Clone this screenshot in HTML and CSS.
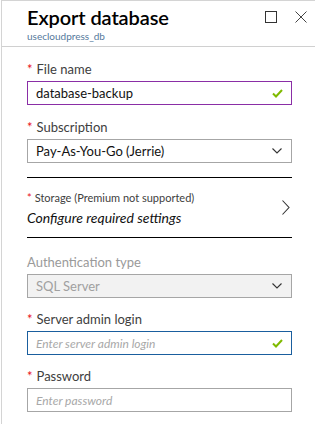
FILE: index.html
```html
<!DOCTYPE html>
<html>
<head>
<meta charset="utf-8">
<link rel="stylesheet" href="styles.css">
</head>
<body>
<div class="blade">
  <header class="head">
    <div class="titles">
      <h1 class="title">Export database</h1>
      <div class="subtitle">usecloudpress_db</div>
    </div>
    <div class="controls">
      <svg class="ctl" width="12" height="12" viewBox="0 0 12 12"><rect x="0.5" y="0.5" width="11" height="11" fill="none" stroke="#333" stroke-width="1"/></svg>
      <svg class="ctl" width="12" height="12" viewBox="0 0 12 12"><path d="M0.5 0.5 L11.5 11.5 M11.5 0.5 L0.5 11.5" stroke="#444" stroke-width="1" fill="none"/></svg>
    </div>
  </header>

  <div class="content">
    <div class="field">
      <div class="label"><span class="req">*</span>File name</div>
      <div class="box box-active">
        <span class="value">database-backup</span>
        <svg class="check" width="11" height="9" viewBox="0 0 11 9"><path d="M1 4.5 L4 7.5 L10 1" stroke="#7fba00" stroke-width="2" fill="none"/></svg>
      </div>
    </div>

    <div class="field">
      <div class="label"><span class="req">*</span>Subscription</div>
      <div class="box">
        <span class="value">Pay-As-You-Go (Jerrie)</span>
        <svg class="chev" width="10" height="6" viewBox="0 0 10 6"><path d="M0.5 0.5 L5 5 L9.5 0.5" stroke="#333" stroke-width="1.1" fill="none"/></svg>
      </div>
    </div>

    <div class="storage">
      <div class="storage-text">
        <div class="storage-label"><span class="req small">*</span>Storage (Premium not supported)</div>
        <div class="storage-value">Configure required settings</div>
      </div>
      <svg class="chev-right" width="8" height="15" viewBox="0 0 8 15"><path d="M0.5 0.5 L7 7.5 L0.5 14.5" stroke="#333" stroke-width="1.1" fill="none"/></svg>
    </div>

    <div class="field field-auth">
      <div class="label label-disabled">Authentication type</div>
      <div class="box box-disabled">
        <span class="value">SQL Server</span>
        <svg class="chev" width="10" height="6" viewBox="0 0 10 6"><path d="M0.5 0.5 L5 5 L9.5 0.5" stroke="#333" stroke-width="1.1" fill="none"/></svg>
      </div>
    </div>

    <div class="field field-tight">
      <div class="label"><span class="req">*</span>Server admin login</div>
      <div class="box box-focus">
        <span class="placeholder">Enter server admin login</span>
        <svg class="check" width="11" height="9" viewBox="0 0 11 9"><path d="M1 4.5 L4 7.5 L10 1" stroke="#7fba00" stroke-width="2" fill="none"/></svg>
      </div>
    </div>

    <div class="field field-tight">
      <div class="label"><span class="req">*</span>Password</div>
      <div class="box box-plain">
        <span class="placeholder">Enter password</span>
      </div>
    </div>
  </div>
</div>
</body>
</html>
```

FILE: styles.css
```css
html, body {
  margin: 0;
  padding: 0;
  background: #ffffff;
}

body {
  font-family: "Lato", "Noto Sans", "Liberation Sans", sans-serif;
  color: #303030;
}

.blade {
  width: 314px;
  height: 424px;
  margin-left: 1px;
  border-left: 1px solid #d4d4d4;
  border-top: 1px solid #d4d4d4;
  box-sizing: border-box;
  overflow: hidden;
}

.head {
  height: 46px;
  box-sizing: border-box;
  border-bottom: 1px solid #d0d0d0;
  padding-left: 25px;
  padding-right: 8px;
  display: flex;
  justify-content: space-between;
  align-items: flex-start;
}

.title {
  margin: 0;
  padding-top: 4px;
  font-size: 20px;
  line-height: 24px;
  font-weight: 600;
  color: #000;
  letter-spacing: -0.1px;
}

.subtitle {
  font-size: 10px;
  line-height: 12px;
  color: #55799c;
  margin-top: 1px;
}

.controls {
  display: flex;
  gap: 18px;
  padding-top: 10px;
}

.content {
  padding-left: 25px;
  padding-right: 23px;
}

.field {
  margin-top: 14px;
}

.field-auth {
  margin-top: 16px;
}

.field-tight {
  margin-top: 13px;
}

.label {
  font-size: 13px;
  line-height: 16px;
  height: 16px;
  color: #404040;
  margin-bottom: 4px;
}

.req {
  color: #e81123;
  margin-right: 4px;
  font-size: 13px;
}

.req.small {
  font-size: 11px;
  margin-right: 3px;
}

.label-disabled {
  color: #9a9a9a;
}

.box {
  height: 24px;
  box-sizing: border-box;
  border: 1px solid #a6a6a6;
  display: flex;
  align-items: center;
  justify-content: space-between;
  padding: 0 9px 0 8px;
  font-size: 13px;
}

.box-active {
  border-color: #8a2ea6;
}

.box-focus {
  border-color: #1a5e9e;
}

.box-disabled {
  background: #f2f2f2;
  color: #a0a0a0;
}

.value {
  color: #111;
}

.box-disabled .value {
  color: #a0a0a0;
}

.placeholder {
  color: #a8a8a8;
  font-style: italic;
  font-size: 12px;
}

.check {
  margin-right: -1px;
}

.storage {
  margin-top: 14px;
  height: 61px;
  box-sizing: border-box;
  border-top: 1px solid #000;
  border-bottom: 1px solid #000;
  display: flex;
  align-items: center;
  justify-content: space-between;
  padding-right: 2px;
}

.storage-text {
  padding-top: 2px;
}

.storage-label {
  font-size: 11px;
  line-height: 14px;
  color: #404040;
}

.storage-value {
  font-size: 14px;
  line-height: 18px;
  font-style: italic;
  color: #111;
  margin-top: 4px;
}
```
